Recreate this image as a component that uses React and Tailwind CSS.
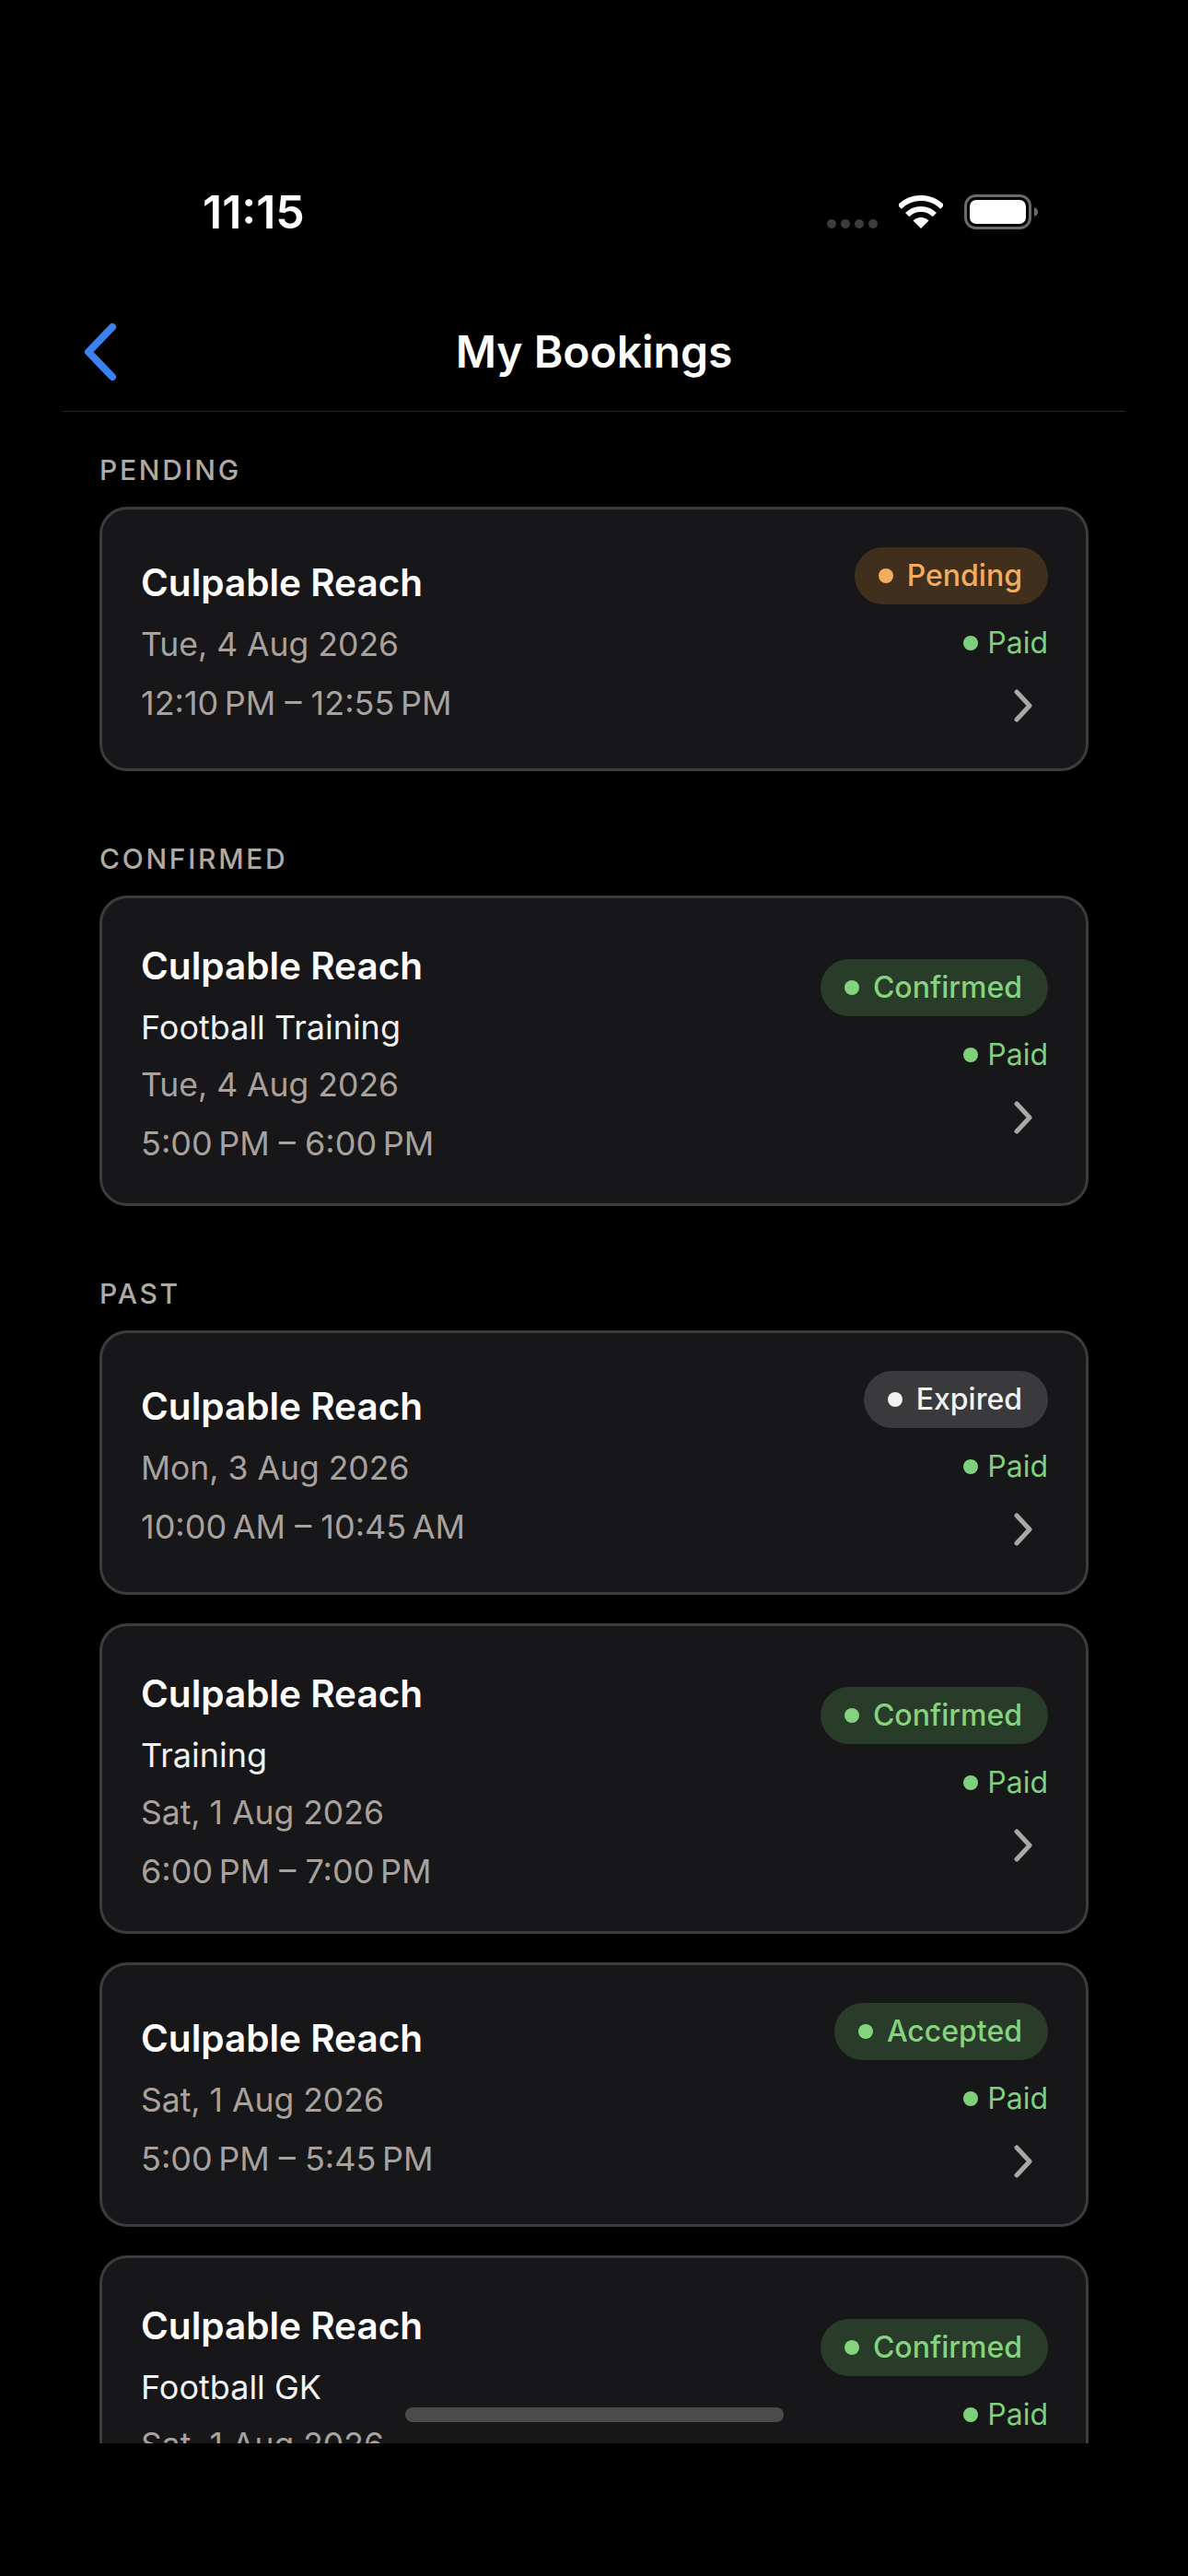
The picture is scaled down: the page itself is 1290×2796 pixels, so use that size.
const pillStyles = {
  Pending: { box: "bg-[#3f2f1c] text-[#f2ae5f]", dot: "bg-[#f2ae5f]" },
  Confirmed: { box: "bg-[#293b29] text-[#85d27f]", dot: "bg-[#85d27f]" },
  Accepted: { box: "bg-[#293b29] text-[#85d27f]", dot: "bg-[#85d27f]" },
  Expired: { box: "bg-[#3a3a3c] text-[#f2f2f2]", dot: "bg-[#f2f2f2]" },
};

const sections = [
  {
    label: "PENDING",
    bookings: [
      { status: "Pending", date: "Tue, 4 Aug 2026", time: "12:10\u202fPM – 12:55\u202fPM" },
    ],
  },
  {
    label: "CONFIRMED",
    bookings: [
      { status: "Confirmed", sub: "Football Training", date: "Tue, 4 Aug 2026", time: "5:00\u202fPM – 6:00\u202fPM" },
    ],
  },
  {
    label: "PAST",
    bookings: [
      { status: "Expired", date: "Mon, 3 Aug 2026", time: "10:00\u202fAM – 10:45\u202fAM" },
      { status: "Confirmed", sub: "Training", date: "Sat, 1 Aug 2026", time: "6:00\u202fPM – 7:00\u202fPM" },
      { status: "Accepted", date: "Sat, 1 Aug 2026", time: "5:00\u202fPM – 5:45\u202fPM" },
      { status: "Confirmed", sub: "Football GK", date: "Sat, 1 Aug 2026", time: "5:00\u202fPM – 5:45\u202fPM" },
    ],
  },
];

const StatusBar = () => (
  <div className="flex h-[300px] items-start justify-between pl-[220px] pr-[163px] pt-[202px]">
    <div className="text-[50px] font-semibold leading-[56px] text-white">11:15</div>
    <div className="flex items-start pt-[9px]">
      {/* Signal dots */}
      <div className="mr-[23px] mt-[27px] flex gap-[5px]">
        <span className="h-[10px] w-[10px] rounded-full bg-[#3c3c3c]"></span>
        <span className="h-[10px] w-[10px] rounded-full bg-[#3c3c3c]"></span>
        <span className="h-[10px] w-[10px] rounded-full bg-[#3c3c3c]"></span>
        <span className="h-[10px] w-[10px] rounded-full bg-[#3c3c3c]"></span>
      </div>
      <svg width="48" height="36" viewBox="0 0 48 36" className="mt-[1px]">
        <path d="M0.67 12.67A33 33 0 0 1 47.33 12.67" fill="none" stroke="#fff" strokeWidth="6" />
        <path d="M9.15 21.15A21 21 0 0 1 38.85 21.15" fill="none" stroke="#fff" strokeWidth="6" />
        <path d="M24 36L15.5 27.5A12 12 0 0 1 32.5 27.5Z" fill="#fff" />
      </svg>
      <svg width="80" height="38" viewBox="0 0 80 38" className="ml-[23px]">
        <rect x="1.5" y="1.5" width="70" height="35" rx="11" fill="none" stroke="#6a6a6a" strokeWidth="3" />
        <rect x="6" y="6" width="61" height="26" rx="7" fill="#fff" />
        <path d="M76 14C79 15 80 17 80 19C80 21 79 23 76 24Z" fill="#6a6a6a" />
      </svg>
    </div>
  </div>
);

const Header = () => (
  <div className="mx-[68px] grid h-[147px] grid-cols-[1fr_auto_1fr] items-center border-b border-[#262626] pt-[18px]">
    <svg width="40" height="64" viewBox="0 0 40 64" className="ml-[20px]">
      <path d="M34 5L8 32L34 59" fill="none" stroke="#3b82f0" strokeWidth="8" strokeLinecap="round" strokeLinejoin="round" />
    </svg>
    <h1 className="text-[48px] font-semibold leading-[60px] text-white">My Bookings</h1>
    <div></div>
  </div>
);

const BookingCard = ({ booking }) => {
  const pill = pillStyles[booking.status];
  return (
    <div className="flex items-center justify-between rounded-[30px] border-[3px] border-[#3c3c3e] bg-[#171719] py-[41px] pl-[42px] pr-[41px]">
      <div className="flex flex-col gap-[16px] pb-[1px] pt-[5px]">
        <div className="text-[40.5px] font-semibold leading-[56px] text-white">Culpable Reach</div>
        {booking.sub && <div className="-mt-[1px] mb-[1px] text-[36px] leading-[46px] text-[#f2f2f2]">{booking.sub}</div>}
        <div className="text-[35.5px] leading-[46px] text-[#a8a29e]">{booking.date}</div>
        <div className="mt-[1px] text-[36px] leading-[46px] text-[#a8a29e]">{booking.time}</div>
      </div>
      <div className="flex h-[199px] flex-col items-end">
        <div className={`flex h-[62px] items-center gap-[15px] rounded-full pl-[26px] pr-[28px] text-[32px] font-medium ${pill.box}`}>
          <span className={`h-[16px] w-[16px] rounded-full ${pill.dot}`}></span>
          {booking.status}
        </div>
        <div className="mt-[19px] flex h-[46px] items-center gap-[10px] text-[32px] text-[#7fd07c]">
          <span className="h-[16px] w-[16px] rounded-full bg-[#7fd07c]"></span>
          Paid
        </div>
        <svg width="20" height="36" viewBox="0 0 20 36" className="mr-[17px] mt-[27px]">
          <path d="M3 3L17 18L3 33" fill="none" stroke="#a8a8a8" strokeWidth="5" strokeLinecap="round" strokeLinejoin="round" />
        </svg>
      </div>
    </div>
  );
};

export default function App() {
  return (
    <div className="relative h-[2796px] w-[1290px] overflow-hidden bg-black font-['Inter',sans-serif]">
      <StatusBar />
      <Header />
      <div className="flex h-[2205px] flex-col gap-[75px] overflow-hidden px-[108px] pt-[43px]">
        {sections.map((section) => (
          <div key={section.label}>
            <div className="mb-[20px] text-[30px] font-medium leading-[40px] tracking-[2.7px] text-[#b0aaa3]">{section.label}</div>
            <div className="flex flex-col gap-[31px]">
              {section.bookings.map((booking, i) => (
                <BookingCard key={i} booking={booking} />
              ))}
            </div>
          </div>
        ))}
      </div>
      {/* Home indicator */}
      <div className="absolute left-[440px] top-[2613px] h-[16px] w-[411px] rounded-full bg-[#4b4b4b]"></div>
    </div>
  );
}
